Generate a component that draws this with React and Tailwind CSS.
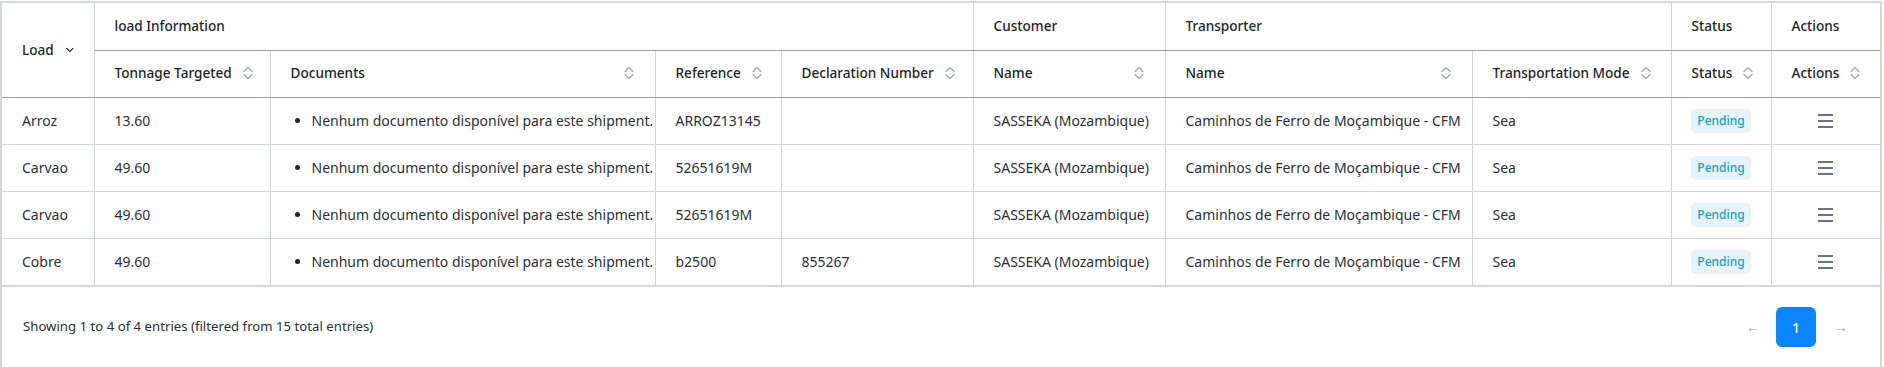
import React from 'react';

const rows = [
    { load: 'Arroz', tonnage: '13.60', reference: 'ARROZ13145', declaration: '' },
    { load: 'Carvao', tonnage: '49.60', reference: '52651619M', declaration: '' },
    { load: 'Carvao', tonnage: '49.60', reference: '52651619M', declaration: '' },
    { load: 'Cobre', tonnage: '49.60', reference: 'b2500', declaration: '855267' },
];

function SortIcon() {
    return (
        <svg width="12" height="16" viewBox="0 0 12 16" fill="none" className="shrink-0">
            <path d="M2 6.5 L6 2.5 L10 6.5" stroke="#a3a8b0" strokeWidth="1.3" strokeLinecap="round" strokeLinejoin="round" />
            <path d="M2 9.5 L6 13.5 L10 9.5" stroke="#a3a8b0" strokeWidth="1.3" strokeLinecap="round" strokeLinejoin="round" />
        </svg>
    );
}

function MenuIcon() {
    return (
        <svg width="15" height="14" viewBox="0 0 15 14" fill="none">
            <path d="M0 1h15M0 7h15M0 13h15" stroke="#6b7280" strokeWidth="1.8" />
        </svg>
    );
}

function SortHeader({ label, last }) {
    return (
        <th className={`h-[47px] px-[20px] font-medium text-left border-b border-b-[#9ca3af] ${last ? '' : 'border-r border-r-[#d1d5db]'}`}>
            <div className="flex items-center justify-between gap-[10px]">
                <span className="whitespace-nowrap">{label}</span>
                <SortIcon />
            </div>
        </th>
    );
}

export default function App() {
    return (
        <div className="pt-px bg-white" style={{ fontFamily: '"Noto Sans", "Open Sans", sans-serif' }}>
            <div className="w-[1882px] border-2 border-[#d4d8dd] bg-white">
                <table className="table-fixed border-collapse w-[1878px] text-[14px] text-[#212529]">
                    <colgroup>
                        <col className="w-[92px]" />
                        <col className="w-[176px]" />
                        <col className="w-[385px]" />
                        <col className="w-[126px]" />
                        <col className="w-[192px]" />
                        <col className="w-[192px]" />
                        <col className="w-[307px]" />
                        <col className="w-[199px]" />
                        <col className="w-[100px]" />
                        <col className="w-[109px]" />
                    </colgroup>
                    <thead className="text-[13.6px]">
                        <tr>
                            <th rowSpan={2} className="px-[20px] font-medium text-left border-r border-r-[#d1d5db] border-b border-b-[#9ca3af]">
                                <div className="flex items-center gap-[12px]">
                                    <span>Load</span>
                                    <svg width="10" height="6" viewBox="0 0 10 6" fill="none">
                                        <path d="M1 1l4 4 4-4" stroke="#212529" strokeWidth="1.5" strokeLinecap="round" strokeLinejoin="round" />
                                    </svg>
                                </div>
                            </th>
                            <th colSpan={4} className="h-[47px] px-[20px] font-medium text-left border-r border-r-[#d1d5db] border-b border-b-[#9ca3af]">load Information</th>
                            <th className="px-[20px] font-medium text-left border-r border-r-[#d1d5db] border-b border-b-[#9ca3af]">Customer</th>
                            <th colSpan={2} className="px-[20px] font-medium text-left border-r border-r-[#d1d5db] border-b border-b-[#9ca3af]">Transporter</th>
                            <th className="px-[20px] font-medium text-left border-r border-r-[#d1d5db] border-b border-b-[#9ca3af]">Status</th>
                            <th className="px-[20px] font-medium text-left border-b border-b-[#9ca3af]">Actions</th>
                        </tr>
                        <tr>
                            <SortHeader label="Tonnage Targeted" />
                            <SortHeader label="Documents" />
                            <SortHeader label="Reference" />
                            <SortHeader label="Declaration Number" />
                            <SortHeader label="Name" />
                            <SortHeader label="Name" />
                            <SortHeader label="Transportation Mode" />
                            <SortHeader label="Status" />
                            <SortHeader label="Actions" last />
                        </tr>
                    </thead>
                    <tbody className="text-[#2b3036]">
                        {rows.map((r, i) => (
                            <tr key={i} className={i < rows.length - 1 ? 'border-b border-b-[#d1d5db]' : ''}>
                                <td className="h-[47px] px-[20px] border-r border-r-[#d1d5db]">{r.load}</td>
                                <td className="px-[20px] border-r border-r-[#d1d5db]">{r.tonnage}</td>
                                <td className="px-[20px] border-r border-r-[#d1d5db]">
                                    <ul className="list-disc pl-[21px] marker:text-[#212529]">
                                        <li className="whitespace-nowrap">Nenhum documento disponível para este shipment.</li>
                                    </ul>
                                </td>
                                <td className="px-[20px] border-r border-r-[#d1d5db]">{r.reference}</td>
                                <td className="px-[20px] border-r border-r-[#d1d5db]">{r.declaration}</td>
                                <td className="px-[20px] border-r border-r-[#d1d5db] whitespace-nowrap">SASSEKA (Mozambique)</td>
                                <td className="px-[20px] border-r border-r-[#d1d5db] whitespace-nowrap">Caminhos de Ferro de Moçambique - CFM</td>
                                <td className="px-[20px] border-r border-r-[#d1d5db]">Sea</td>
                                <td className="px-[10px] border-r border-r-[#d1d5db] text-center">
                                    <span className="inline-block rounded-[5px] bg-[#e6f3fd] px-[6px] py-[3px] text-[12px] font-medium text-[#17a2b8]">Pending</span>
                                </td>
                                <td className="px-[20px] text-center">
                                    <div className="flex justify-center">
                                        <MenuIcon />
                                    </div>
                                </td>
                            </tr>
                        ))}
                    </tbody>
                </table>
                <div className="border-t-2 border-[#d4d8dd] flex items-center justify-between pl-[21px] pr-[34px] py-[20px]">
                    <span className="text-[13.2px] text-[#2b3036]">Showing 1 to 4 of 4 entries (filtered from 15 total entries)</span>
                    <div className="flex items-center gap-[18px]">
                        <button className="w-[12px] text-[14px] text-[#9ca3af] leading-none">←</button>
                        <button className="w-[40px] h-[40px] rounded-[6px] bg-[#0d84ff] text-white text-[14px] font-medium">1</button>
                        <button className="w-[12px] text-[14px] text-[#9ca3af] leading-none">→</button>
                    </div>
                </div>
            </div>
        </div>
    );
}
